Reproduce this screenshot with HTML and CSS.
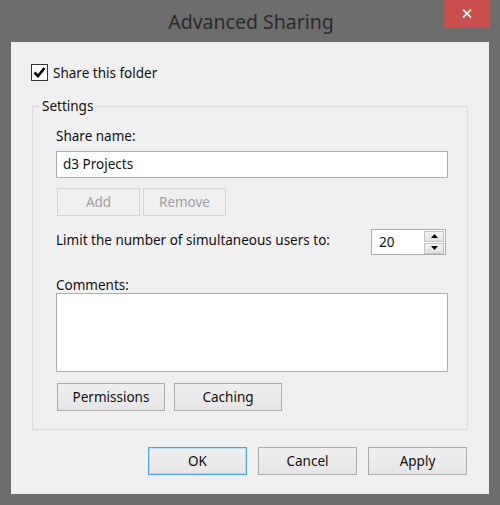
FILE: index.html
```html
<!DOCTYPE html>
<html lang="en">
<head>
    <meta charset="UTF-8">
    <meta name="viewport" content="width=device-width, initial-scale=1.0">
    <title>Advanced Sharing</title>
    <link rel="stylesheet" href="styles.css">
</head>
<body>
    <div class="window">
        <div class="titlebar">
            <span class="title">Advanced Sharing</span>
            <button class="close" aria-label="Close">&#x2715;</button>
        </div>
        <div class="client">
            <label class="check-row">
                <span class="checkbox">
                    <svg width="13" height="13" viewBox="0 0 13 13"><path d="M1.5 6.5 L5 10 L11.5 2" fill="none" stroke="#000" stroke-width="2.6"/></svg>
                </span>
                Share this folder
            </label>

            <div class="group">
                <span class="legend">Settings</span>
                <div class="label share-label">Share name:</div>
                <div class="textbox">d3 Projects</div>
                <div class="btn-row small-gap">
                    <button class="btn btn-add" disabled>Add</button>
                    <button class="btn btn-add" disabled>Remove</button>
                </div>
                <div class="limit-row">
                    <span class="label limit-label">Limit the number of simultaneous users to:</span>
                    <div class="spinner">
                        <span class="spin-value">20</span>
                        <div class="spin-buttons">
                            <span class="spin-btn">
                                <svg width="7" height="4" viewBox="0 0 7 4"><path d="M3.5 0 L7 4 L0 4 Z" fill="#000"/></svg>
                            </span>
                            <span class="spin-btn">
                                <svg width="7" height="4" viewBox="0 0 7 4"><path d="M0 0 L7 0 L3.5 4 Z" fill="#000"/></svg>
                            </span>
                        </div>
                    </div>
                </div>
                <div class="label comments-label">Comments:</div>
                <div class="textarea"></div>
                <div class="btn-row wide-gap">
                    <button class="btn btn-mid">Permissions</button>
                    <button class="btn btn-mid">Caching</button>
                </div>
            </div>

            <div class="dialog-buttons">
                <button class="btn btn-dlg default">OK</button>
                <button class="btn btn-dlg">Cancel</button>
                <button class="btn btn-dlg">Apply</button>
            </div>
        </div>
    </div>
</body>
</html>
```

FILE: styles.css
```css
body {
    margin: 0;
    background-color: #6d6d6d;
    font-family: "Noto Sans", "Open Sans", sans-serif;
    font-size: 13.5px;
    color: #111;
}
.window {
    width: 500px;
    height: 505px;
    background-color: #6d6d6d;
}
.titlebar {
    position: relative;
    height: 42px;
    display: flex;
    justify-content: center;
    align-items: center;
}
.title {
    font-size: 19.5px;
    color: #2a2a2a;
    padding-left: 2px;
    padding-top: 1px;
}
.close {
    position: absolute;
    top: 0;
    right: 10px;
    width: 46px;
    height: 28px;
    border: none;
    padding: 0;
    background-color: #c94f4f;
    color: #fff;
    font-size: 15px;
    font-weight: bold;
    font-family: "DejaVu Sans", sans-serif;
}
.client {
    margin: 0 11px;
    height: 452px;
    box-sizing: border-box;
    background-color: #f0f0f0;
    padding: 22px 0 0 20px;
}
.check-row {
    display: flex;
    align-items: center;
    gap: 5px;
    height: 17px;
}
.checkbox {
    width: 17px;
    height: 17px;
    box-sizing: border-box;
    border: 1px solid #333;
    background-color: #fff;
    display: flex;
    align-items: center;
    justify-content: center;
}
.group {
    margin: 25px 21px 0 1px;
    border: 1px solid #dcdcdc;
    padding: 0 19px 18px 23px;
}
.legend {
    display: block;
    width: fit-content;
    margin: -10px 0 0 -16px;
    padding: 0 2px;
    line-height: 18px;
    background-color: #f0f0f0;
}
.label {
    line-height: 18px;
}
.share-label {
    margin-top: 12px;
}
.textbox {
    margin-top: 6px;
    height: 27px;
    box-sizing: border-box;
    border: 1px solid #abadb3;
    background-color: #fff;
    padding-left: 6px;
    line-height: 25px;
}
.btn-row {
    display: flex;
    margin-top: 10px;
}
.small-gap {
    gap: 3px;
    padding-left: 1px;
}
.wide-gap {
    gap: 9px;
    margin-top: 11px;
    padding-left: 1px;
}
.btn {
    height: 28px;
    box-sizing: border-box;
    border: 1px solid #acacac;
    background: linear-gradient(#f0f0f0, #e5e5e5);
    font-family: inherit;
    font-size: 13.5px;
    color: #111;
    padding: 0;
}
.btn:disabled {
    border-color: #d5d5d5;
    background: #f0f0f0;
    color: #a0a0a0;
}
.btn-add {
    width: 83px;
}
.btn-mid {
    width: 108px;
}
.limit-row {
    display: flex;
    justify-content: space-between;
    align-items: center;
    margin-top: 13px;
    padding-right: 2px;
}
.limit-label {
    padding-bottom: 4px;
}
.spinner {
    width: 75px;
    height: 26px;
    box-sizing: border-box;
    border: 1px solid #abadb3;
    background-color: #fff;
    display: flex;
    justify-content: space-between;
    align-items: center;
}
.spin-value {
    padding-left: 7px;
}
.spin-buttons {
    display: flex;
    flex-direction: column;
    gap: 1px;
    padding-right: 1px;
}
.spin-btn {
    width: 20px;
    height: 11px;
    box-sizing: border-box;
    border: 1px solid #c4c4c4;
    background: linear-gradient(#f3f3f3, #e3e3e3);
    display: flex;
    align-items: center;
    justify-content: center;
}
.comments-label {
    margin-top: 22px;
    line-height: 16px;
}
.textarea {
    height: 79px;
    box-sizing: border-box;
    border: 1px solid #abadb3;
    background-color: #fff;
}
.dialog-buttons {
    display: flex;
    justify-content: flex-end;
    gap: 11px;
    margin-top: 17px;
    padding-right: 22px;
}
.btn-dlg {
    width: 99px;
}
.btn-dlg.default {
    border-color: #4aa3e6;
    box-shadow: inset 0 0 0 1px #b9dcf7;
}
```
